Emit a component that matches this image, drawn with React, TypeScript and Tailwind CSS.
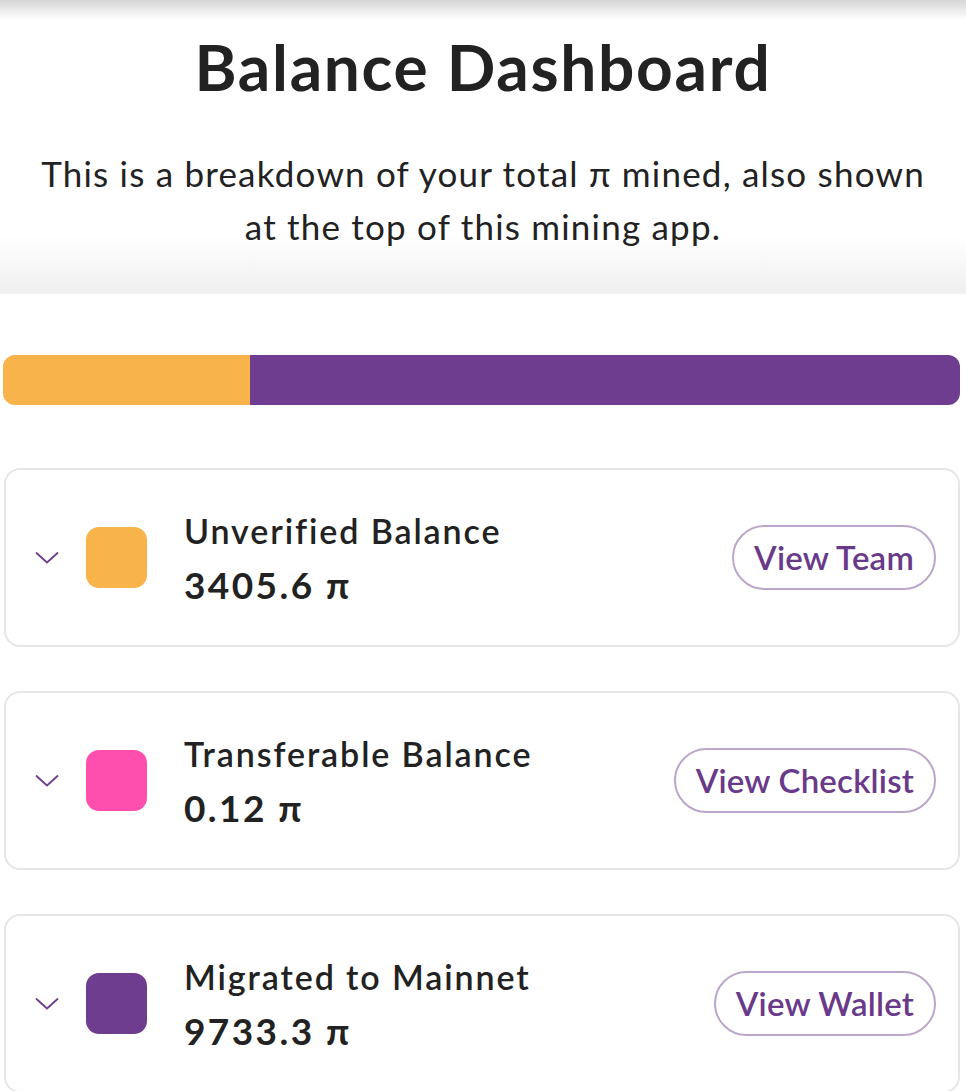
import React from "react";

const font = { fontFamily: "Lato, 'Noto Sans', sans-serif" };

function Chevron() {
  return (
    <svg width="24" height="14" viewBox="0 0 24 14" fill="none">
      <path d="M1.5 2 L12 11.5 L22.5 2" stroke="#6f3d8f" strokeWidth="1.8" strokeLinecap="round" strokeLinejoin="round" />
    </svg>
  );
}

type Row = { title: string; value: string; color: string; btn: string };

const rows: Row[] = [
  { title: "Unverified Balance", value: "3405.6 π", color: "bg-[#f9b34b]", btn: "View Team" },
  { title: "Transferable Balance", value: "0.12 π", color: "bg-[#ff4fae]", btn: "View Checklist" },
  { title: "Migrated to Mainnet", value: "9733.3 π", color: "bg-[#6f3d8f]", btn: "View Wallet" },
];

function Card({ r }: { r: Row }) {
  return (
    <div className="flex h-[179px] items-center rounded-[16px] border-2 border-[#e6e6e6] bg-white pl-[29px] pr-[22px]">
      <Chevron />
      <div className={`ml-[27px] h-[61px] w-[61px] rounded-[13px] ${r.color}`} />
      <div className="ml-[37px] flex flex-1 flex-col">
        <div className="text-[34px] font-semibold leading-[40px] tracking-[1.9px] text-[#222]">{r.title}</div>
        <div className="mt-[14px] text-[37px] font-bold leading-[40px] tracking-[2.4px] text-[#222]">{r.value}</div>
      </div>
      <button className="h-[65px] rounded-full border-2 border-[#bba7ca] px-[20px] text-[33px] font-semibold tracking-[0.2px] text-[#6a3a8a]">
        {r.btn}
      </button>
    </div>
  );
}

export default function App() {
  return (
    <div className="min-h-[1091px] w-full bg-white" style={font}>
      <div className="flex h-[294px] flex-col items-center bg-[linear-gradient(to_bottom,#d6d6d6_0px,#ffffff_20px,#ffffff_235px,#f0f0f0_293px)] pt-[31px]">
        <h1 className="text-[64px] font-bold leading-[72px] tracking-[1.7px] text-[#222]">Balance Dashboard</h1>
        <p className="mt-[44px] px-[20px] text-center text-[35px] leading-[53px] tracking-[1.2px] text-[#222]">
          This is a breakdown of your total π mined, also shown
          <br />
          at the top of this mining app.
        </p>
      </div>
      <div className="pl-[4px] pr-[6px]">
        <div className="-ml-[1px] mt-[61px] flex h-[50px] overflow-hidden rounded-[12px]">
          <div className="w-[247px] bg-[#f9b34b]" />
          <div className="flex-1 bg-[#6f3d8f]" />
        </div>
        <div className="mt-[63px] flex flex-col gap-[44px]">
          {rows.map((r) => (
            <Card key={r.title} r={r} />
          ))}
        </div>
      </div>
    </div>
  );
}
